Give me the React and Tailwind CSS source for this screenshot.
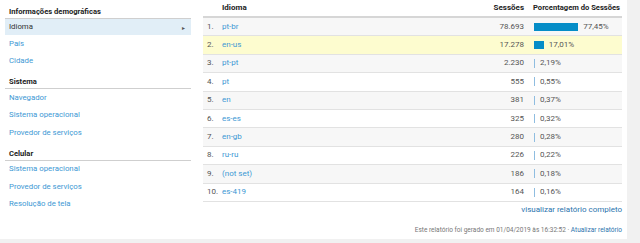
const sections = [
  { title: "Informações demográficas", items: ["Idioma", "País", "Cidade"], active: "Idioma" },
  { title: "Sistema", items: ["Navegador", "Sistema operacional", "Provedor de serviços"] },
  { title: "Celular", items: ["Sistema operacional", "Provedor de serviços", "Resolução de tela"] },
];

const rows = [
  { lang: "pt-br", sessions: "78.693", pct: 77.45, label: "77,45%" },
  { lang: "en-us", sessions: "17.278", pct: 17.01, label: "17,01%" },
  { lang: "pt-pt", sessions: "2.230", pct: 2.19, label: "2,19%" },
  { lang: "pt", sessions: "555", pct: 0.55, label: "0,55%" },
  { lang: "en", sessions: "381", pct: 0.37, label: "0,37%" },
  { lang: "es-es", sessions: "325", pct: 0.32, label: "0,32%" },
  { lang: "en-gb", sessions: "280", pct: 0.28, label: "0,28%" },
  { lang: "ru-ru", sessions: "226", pct: 0.22, label: "0,22%" },
  { lang: "(not set)", sessions: "186", pct: 0.18, label: "0,18%" },
  { lang: "es-419", sessions: "164", pct: 0.16, label: "0,16%" },
];

export default function App() {
  return (
    <div
      className="w-[640px] h-[243px] bg-[#f1f1f1] overflow-hidden text-[8px] text-[#444]"
      style={{ fontFamily: "Roboto, 'Liberation Sans', sans-serif" }}
    >
      <div className="w-[627px] h-[239px] bg-white flex flex-col">
        <div className="flex">
          {/* Left nav */}
          <div className="w-[186px] ml-[5px] flex flex-col text-[7.8px]">
            {sections.map((s) => (
              <div key={s.title}>
                <div className="h-[18px] pt-[6px] pl-[4px] font-bold text-[7.6px] text-[#222] leading-[12px]">
                  {s.title}
                </div>
                <div className="h-[1px] bg-[#cfcfcf]" />
                {s.items.map((it) => (
                  <div
                    key={it}
                    className={
                      it === s.active
                        ? "h-[16px] pl-[4px] pr-[6px] flex items-center justify-between bg-[#e1eef7] text-[#333]"
                        : "h-[17.5px] pl-[4px] flex items-center text-[#3d98d4]"
                    }
                  >
                    <span>{it}</span>
                    {it === s.active && <span className="text-[6px] text-[#555]">▸</span>}
                  </div>
                ))}
              </div>
            ))}
          </div>

          {/* Table */}
          <div className="ml-[12px] w-[419px] flex flex-col">
            <div className="h-[18px] flex items-center font-bold text-[#222] border-b-2 border-[#d6d6d6] whitespace-nowrap">
              <div className="w-[19px]" />
              <div className="flex-1">Idioma</div>
              <div className="w-[70px] text-right">Sessões</div>
              <div className="w-[98px] pl-[9px] text-[7.6px]">Porcentagem do Sessões</div>
            </div>
            {rows.map((r, i) => (
              <div
                key={r.lang}
                className={
                  "h-[18.4px] flex items-center border-b border-[#e2e2e2] " +
                  (i === 1 ? "bg-[#fdfccf]" : i % 2 === 0 ? "bg-[#f7f7f7]" : "bg-white")
                }
              >
                <div className="w-[19px] pl-[4px] text-[#555]">{i + 1}.</div>
                <div className="flex-1 text-[#3d98d4]">{r.lang}</div>
                <div className="w-[70px] text-right text-[#555]">{r.sessions}</div>
                <div className="w-[98px] pl-[10px] flex items-center">
                  {r.pct > 5 ? (
                    <div
                      className="h-[8px] bg-[#058dc7]"
                      style={{ width: `${(r.pct / 100) * 57}px` }}
                    />
                  ) : (
                    <div className="h-[9px] w-[1px] bg-[#8fbde0]" />
                  )}
                  <span className="ml-[5px] text-[#555]">{r.label}</span>
                </div>
              </div>
            ))}
            <div className="mt-[2px] text-right text-[8px] text-[#2a73ad]">
              visualizar relatório completo
            </div>
            <div className="mt-[10px] text-right text-[6.5px] text-[#777]">
              Este relatório foi gerado em 01/04/2019 às 16:32:52 ·{" "}
              <span className="text-[#2a73ad]">Atualizar relatório</span>
            </div>
          </div>
        </div>
      </div>
    </div>
  );
}
